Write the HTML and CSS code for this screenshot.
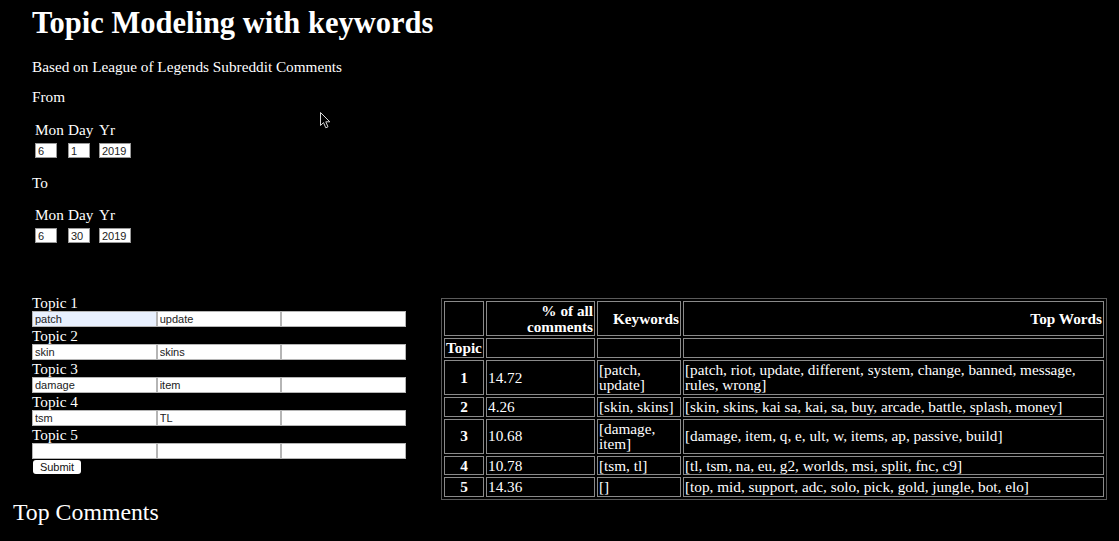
FILE: index.html
```html
<!DOCTYPE html>
<html lang="en">
<head>
<meta charset="utf-8">
<title>Topic Modeling with keywords</title>
<link rel="stylesheet" href="styles.css">
</head>
<body>
<svg class="cursor" width="12" height="17" viewBox="0 0 12 17" aria-hidden="true"><path d="M0.5 0.5 L0.5 13.5 L3.5 10.6 L5.8 15.8 L8 14.8 L5.8 9.8 L9.8 9.8 Z" fill="#000" stroke="#d8d8d8" stroke-width="1"/></svg>
<header class="intro">
  <h1 class="title">Topic Modeling with keywords</h1>
  <p class="subtitle">Based on League of Legends Subreddit Comments</p>
  <p class="label">From</p>
  <table class="date">
    <tr><td class="c-mon">Mon</td><td class="c-day">Day</td><td class="c-yr">Yr</td></tr>
    <tr><td><input class="num num-s" value="6"></td><td><input class="num num-s" value="1"></td><td><input class="num num-l" value="2019"></td></tr>
  </table>
  <p class="label label-to">To</p>
  <table class="date date-to">
    <tr><td class="c-mon">Mon</td><td class="c-day">Day</td><td class="c-yr">Yr</td></tr>
    <tr><td><input class="num num-s" value="6"></td><td><input class="num num-s" value="30"></td><td><input class="num num-l" value="2019"></td></tr>
  </table>
</header>
<section class="main">
  <form class="topics">
    <div class="topic-label">Topic 1</div>
    <div class="kw-row"><input class="kw kw-auto" value="patch"><input class="kw" value="update"><input class="kw" value=""></div>
    <div class="topic-label">Topic 2</div>
    <div class="kw-row"><input class="kw" value="skin"><input class="kw" value="skins"><input class="kw" value=""></div>
    <div class="topic-label">Topic 3</div>
    <div class="kw-row"><input class="kw" value="damage"><input class="kw" value="item"><input class="kw" value=""></div>
    <div class="topic-label">Topic 4</div>
    <div class="kw-row"><input class="kw" value="tsm"><input class="kw" value="TL"><input class="kw" value=""></div>
    <div class="topic-label">Topic 5</div>
    <div class="kw-row"><input class="kw" value=""><input class="kw" value=""><input class="kw" value=""></div>
    <button type="button" class="submit">Submit</button>
  </form>
  <table class="results">
    <colgroup><col class="col-idx"><col class="col-pct"><col class="col-kw"><col class="col-top"></colgroup>
    <thead>
      <tr class="head"><th></th><th>% of all comments</th><th>Keywords</th><th>Top Words</th></tr>
      <tr class="head"><th>Topic</th><th></th><th></th><th></th></tr>
    </thead>
    <tbody>
      <tr><th class="idx">1</th><td>14.72</td><td>[patch, update]</td><td>[patch, riot, update, different, system, change, banned, message, rules, wrong]</td></tr>
      <tr><th class="idx">2</th><td>4.26</td><td>[skin, skins]</td><td>[skin, skins, kai sa, kai, sa, buy, arcade, battle, splash, money]</td></tr>
      <tr><th class="idx">3</th><td>10.68</td><td>[damage, item]</td><td>[damage, item, q, e, ult, w, items, ap, passive, build]</td></tr>
      <tr><th class="idx">4</th><td>10.78</td><td>[tsm, tl]</td><td>[tl, tsm, na, eu, g2, worlds, msi, split, fnc, c9]</td></tr>
      <tr><th class="idx">5</th><td>14.36</td><td>[]</td><td>[top, mid, support, adc, solo, pick, gold, jungle, bot, elo]</td></tr>
    </tbody>
  </table>
</section>
<h2 class="comments">Top Comments</h2>
</body>
</html>
```
FILE: styles.css
```css
html, body {
  margin: 0;
  padding: 0;
  background: #000;
  color: #fff;
  font-family: "Liberation Serif", "Times New Roman", serif;
  font-size: 15.25px;
}
body {
  position: relative;
  width: 1119px;
  height: 541px;
  overflow: hidden;
}
.cursor {
  position: absolute;
  left: 320px;
  top: 112px;
}
.intro {
  padding: 6px 0 0 32px;
}
.title {
  margin: 0;
  font-size: 30.5px;
  line-height: 34px;
  font-weight: bold;
}
.subtitle {
  margin: 18px 0 0;
  line-height: 18px;
}
.label {
  margin: 12px 0 0;
  line-height: 18px;
}
.label-to {
  margin-top: 13px;
}
.date {
  margin-top: 12px;
  border-spacing: 2px;
  border-collapse: separate;
}
.date-to {
  margin-top: 11px;
}
.date td {
  padding: 1px;
  line-height: 18px;
  vertical-align: top;
}
.date .c-mon { width: 29px; }
.date .c-day { width: 27px; }
.num {
  display: block;
  box-sizing: border-box;
  height: 15px;
  margin: 0;
  padding: 0 2px;
  border: 1px solid #9a9a9a;
  background: #fff;
  color: #222;
  font-family: "Liberation Sans", Arial, sans-serif;
  font-size: 11px;
}
.num-s { width: 22px; }
.num-l { width: 32px; }

.main {
  display: flex;
  align-items: flex-start;
  gap: 35px;
  margin-top: 48px;
  padding-left: 32px;
}
.topics {
  width: 374px;
  margin: 0;
}
.topic-label {
  line-height: 17px;
  height: 17px;
}
.kw-row {
  display: flex;
  height: 16px;
}
.kw {
  flex: 1 1 0;
  min-width: 0;
  box-sizing: border-box;
  height: 16px;
  margin: 0;
  padding: 0 2px;
  border: 1px solid #b5b5b5;
  background: #fff;
  color: #222;
  font-family: "Liberation Sans", Arial, sans-serif;
  font-size: 11px;
}
.kw-auto {
  background: #e8f0fe;
}
.submit {
  display: block;
  box-sizing: border-box;
  width: 48px;
  height: 14px;
  margin: 1px 0 0 1px;
  padding: 0;
  border: none;
  border-radius: 3px;
  background: #fff;
  color: #111;
  font-family: "Liberation Sans", Arial, sans-serif;
  font-size: 11px;
  line-height: 14px;
}

.results {
  margin-top: 4px;
  width: 666px;
  table-layout: fixed;
  border-collapse: separate;
  border-spacing: 2px;
  border: 1px solid #5a5a5a;
  font-size: 15.25px;
  line-height: 15.6px;
}
.col-idx { width: 40px; }
.col-pct { width: 109px; }
.col-kw { width: 84px; }
.col-top { width: 421px; }
.results th,
.results td {
  padding: 1px;
  border: 1px solid #8a8a8a;
  vertical-align: middle;
}
.results td {
  text-align: left;
}
.results .head th {
  text-align: right;
  font-weight: bold;
}
.results .head th:first-child {
  text-align: left;
}
.results .idx {
  text-align: center;
  font-weight: bold;
}
.comments {
  margin: 0;
  padding-left: 13px;
  font-size: 23.8px;
  line-height: 24px;
  font-weight: normal;
}
```
